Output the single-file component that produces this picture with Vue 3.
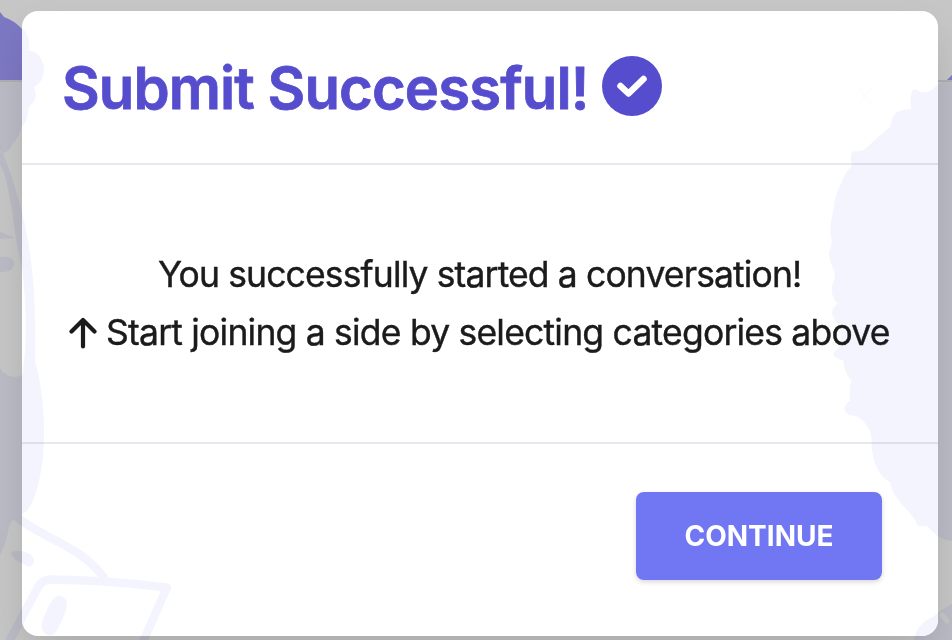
<script setup>
const fills = [
  // hair and face contour on the left
  'M0 12 L4 17 Q15 21 22 29 Q30 32 29 51 C37 51 44 59 44 69 C44 78 40 84 34 87 Q38 97 33 103 Q28 106 28 114 Q26 124 22 126 Q19 137 12 145 Q8 153 3 153 L0 151Z',
  'M0 152 L3 153 Q12 176 19 201 C29 235 35 280 35 325 L35 362 C41 380 44 407 44 435 C44 470 36 500 27 511 L22 514 L13 520 Q9 523 8 532 Q6 544 0 555 L0 368 Q5 377 16 377 L22 375 C27 350 27 310 22 267 C15 242 13 210 10 200 Q6 175 0 164Z',
  'M0 232 L15 238 L0 239Z',
  'M0 257 Q14 255 14 264 Q13 273 0 272Z',
  // hair on the right
  'M952 75 L947 80 L938 84 Q930 93 924 92 C920 93 917 89 914 89 Q909 93 911 109 Q897 110 894 115 Q892 119 890 127 L876 139 L866 148 Q862 152 854 151 Q849 153 852 165 Q843 176 841 184 Q834 196 834 208 Q829 226 831 237 Q833 245 829 252 Q829 260 835 273 Q835 280 832 286 Q831 299 838 304 Q832 307 832 313 Q833 320 840 326 L841 346 Q834 351 833 355 Q836 359 843 360 Q845 374 851 380 Q849 392 850 401 Q844 404 845 411 Q848 416 856 416 Q864 418 871 434 L872 450 C874 467 882 479 890 482 C892 501 914 512 917 525 Q919 527 927 526 Q940 541 952 541Z',
  'M914 640 Q917 623 933 617 L940 611 L952 604 V640Z',
  // eye marks
  'M11 552 Q20 549 30 554 Q34 557 34 562 Q31 569 25 565 L16 560 Q11 556 11 552Z',
  'M61 596 C69 598 68 609 62 620 C57 632 54 637 48 635 C41 633 40 626 44 617 C49 606 53 594 61 596Z'
]
const lines = [
  'M16 516 C39 538 79 543 105 579',
  'M9 642 L36 591 Q41 579 52 579.500 Q106 580 167 587.500 L142 644'
]
</script>

<template>
  <main class="page">
    <svg class="art backdrop" viewBox="0 0 952 640" aria-hidden="true">
      <path v-for="d in fills" :key="d" :d="d" class="fill" />
      <path v-for="d in lines" :key="d" :d="d" class="line" />
      <path class="banner" d="M0 12 L4 17 Q15 21 22 29 V80 H0Z M947 80 L952 75 V80Z" />
      <path class="rule" d="M0 81 H952" />
      <path class="glint" d="M942 615 L947 621" />
    </svg>
    <section class="modal" role="dialog">
      <header class="head">
        <h1>Submit Successful!</h1>
        <svg class="badge" viewBox="0 0 60 60" aria-hidden="true">
          <circle cx="30" cy="30" r="30" />
          <path d="M18.500 30 L26.500 37.500 L41.500 23" />
        </svg>
        <svg class="close" viewBox="0 0 18 24" aria-hidden="true"><path d="M1 1 L17 23 M17 1 L1 23" /></svg>
      </header>
      <div class="body">
        <p class="first">You successfully started a conversation!</p>
        <p class="second">
          <svg class="arrow" viewBox="0 0 28 32" aria-hidden="true"><path d="M14 29.500 V3 M2.500 14.500 L14 3 L25.500 14.500" /></svg>
          <span>Start joining a side by selecting categories above</span>
        </p>
      </div>
      <footer class="foot">
        <button type="button">CONTINUE</button>
      </footer>
      <svg class="art tint" viewBox="0 0 952 640" aria-hidden="true">
        <path v-for="d in fills" :key="d" :d="d" class="fill" />
        <path v-for="d in lines" :key="d" :d="d" class="line" />
      </svg>
    </section>
  </main>
</template>

<style>
body { margin: 0; overflow: hidden; }
</style>

<style scoped>
.page {
  position: relative;
  box-sizing: border-box;
  width: 952px;
  height: 640px;
  padding: 11px 14px 4px 22px;
  overflow: hidden;
  background: #c6c6c6;
  font-family: Inter, "Liberation Sans", sans-serif;
}
.art { position: absolute; width: 952px; height: 640px; pointer-events: none; }
.backdrop { left: 0; top: 0; }
.tint { left: -22px; top: -11px; mix-blend-mode: multiply; }
.fill { fill: #bbbbc6; }
.line { fill: none; stroke: #bbbbc6; stroke-width: 8.500; stroke-linejoin: round; }
.tint .fill { fill: #f4f4fe; }
.tint .line { stroke: #f4f4fe; }
.banner { fill: #7d78c3; }
.rule { stroke: #aeaeb3; stroke-width: 2; }
.glint { stroke: #c6c6c6; stroke-width: 5; stroke-linecap: round; }
.modal {
  position: relative;
  isolation: isolate;
  box-sizing: border-box;
  height: 625px;
  display: flex;
  flex-direction: column;
  overflow: hidden;
  border-radius: 16px;
  background: #fff;
  box-shadow: 0 20px 40px -6px rgba(0, 0, 0, 0.15);
}
.head {
  box-sizing: border-box;
  height: 154px;
  padding: 0 65px 2px 40px;
  display: flex;
  align-items: center;
  border-bottom: 2px solid #e8e8ef;
}
h1 {
  margin: 4px 0 0;
  width: 540px;
  flex: none;
  font-size: 58px;
  line-height: 64px;
  font-weight: 600;
  letter-spacing: -0.900px;
  -webkit-text-stroke: 0.800px #564dce;
  white-space: nowrap;
  color: #564dce;
}
.badge { width: 60px; height: 60px; flex: none; }
.badge circle { fill: #564dce; }
.badge path { fill: none; stroke: #fff; stroke-width: 6.500; stroke-linecap: round; stroke-linejoin: round; }
.close { width: 16px; height: 23px; margin: 20px 0 0 auto; }
.close path { stroke: #fdfdfd; stroke-width: 3; }
.body {
  box-sizing: border-box;
  height: 279px;
  padding-top: 81px;
  border-bottom: 2px solid #e8e8ef;
  color: #1b1b1c;
  font-size: 35.500px;
  line-height: 58px;
  -webkit-text-stroke: 0.400px #1b1b1c;
  white-space: nowrap;
}
p { margin: 0; display: flex; align-items: center; }
.first { padding-left: 136px; letter-spacing: -0.870px; }
.second { padding-left: 47px; letter-spacing: -0.790px; }
.arrow { width: 28px; height: 32px; margin-right: 9px; flex: none; }
.arrow path { fill: none; stroke: #1b1b1c; stroke-width: 4.200; stroke-linecap: round; stroke-linejoin: round; }
.foot { padding: 48px 56px; display: flex; justify-content: flex-end; }
button {
  width: 246px;
  height: 88px;
  padding: 0;
  border: 0;
  border-radius: 8px;
  background: #7176f2;
  color: #fff;
  font: 700 28px/40px Inter, "Liberation Sans", sans-serif;
  letter-spacing: 0;
  box-shadow: 0 2px 5px rgba(0, 0, 0, 0.16);
}
</style>
